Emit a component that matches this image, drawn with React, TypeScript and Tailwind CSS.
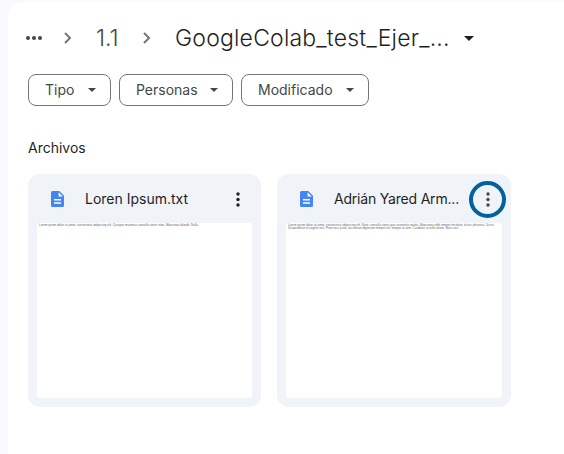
import React from "react";

function Caret({ className }: { className: string }) {
  return (
    <svg className={className} viewBox="0 0 10 5" fill="currentColor">
      <path d="M0 0h10L5 5z" />
    </svg>
  );
}

function Chevron() {
  return (
    <svg className="h-3 w-2 shrink-0 text-[#747775]" viewBox="0 0 8 12" fill="none" stroke="currentColor" strokeWidth="2">
      <path d="M1 1l5 5-5 5" />
    </svg>
  );
}

function Chip({ label, width }: { label: string; width: string }) {
  return (
    <button className={`flex h-8 items-center justify-between rounded-lg border border-[#747775] pr-[14px] pl-4 text-[#444746] ${width}`}>
      <span className="text-[14px] leading-5 whitespace-nowrap">{label}</span>
      <Caret className="h-1 w-2 shrink-0" />
    </button>
  );
}

function Dots({ color }: { color: string }) {
  return (
    <svg className={`h-[15px] w-1 ${color}`} viewBox="0 0 4 15" fill="currentColor">
      <circle cx="2" cy="2" r="1.7" />
      <circle cx="2" cy="7.5" r="1.7" />
      <circle cx="2" cy="13" r="1.7" />
    </svg>
  );
}

function DocIcon() {
  return (
    <svg className="h-4 w-[13px] shrink-0" viewBox="0 0 13 16">
      <path d="M1.5 0H8.3L13 4.7v9.8a1.5 1.5 0 0 1-1.5 1.5h-10A1.5 1.5 0 0 1 0 14.5v-13A1.5 1.5 0 0 1 1.5 0z" fill="#4285f4" />
      <path d="M7.6 1.2v4.2h4.2zM3 8h7v1.5H3zM3 11.2h7v1.5H3z" fill="#fff" />
    </svg>
  );
}

type CardProps = { name: string; width: string; text: string; lines: string[]; marked?: boolean };

function Card({ name, width, text, lines, marked }: CardProps) {
  return (
    <div className={`flex h-[233px] flex-col rounded-xl bg-[#f0f3f8] px-[9px] pb-[9px] ${width}`}>
      <div className="flex h-[49px] shrink-0 items-center pt-px pl-[14px]">
        <DocIcon />
        <span className={`ml-[21px] flex-1 text-[14px] leading-5 whitespace-nowrap text-[#1f1f1f] ${text}`}>{name}</span>
        <div className={`-mr-1 flex shrink-0 items-center justify-center rounded-full ${marked ? "size-[37px] border-4 border-[#01639b]" : "size-9"}`}>
          <Dots color={marked ? "text-[#444746]" : "text-[#1f1f1f]"} />
        </div>
      </div>
      <div className="min-h-0 flex-1 overflow-hidden rounded-[3px] bg-white pt-[1px] pl-[2px] font-['Liberation_Sans',sans-serif] text-[3px] leading-[3px] text-[#666]">
        {lines.map((line) => (
          <div key={line} className="whitespace-nowrap">{line}</div>
        ))}
      </div>
    </div>
  );
}

export default function App() {
  return (
    <div className="h-[454px] w-[564px] overflow-hidden bg-[#f8fafd] pt-0.5 pl-2 font-['Inter',sans-serif]">
      <main className="h-full rounded-tl-2xl bg-white pl-5">
        <nav className="flex h-[72px] items-center">
          <svg className="-ml-[2px] h-1 w-4 shrink-0 text-[#444746]" viewBox="0 0 16 4" fill="currentColor">
            <circle cx="2" cy="2" r="2" />
            <circle cx="8" cy="2" r="2" />
            <circle cx="14" cy="2" r="2" />
          </svg>
          <span className="ml-[22px] flex"><Chevron /></span>
          <span className="ml-6 w-[47px] text-[23px] leading-8 font-light text-[#444746]">1.1</span>
          <Chevron />
          <span className="ml-[24px] w-[274px] text-[23px] leading-8 font-light tracking-[0.2px] whitespace-nowrap text-[#1f1f1f]">GoogleColab_test_Ejer_...</span>
          <Caret className="ml-[15px] h-[5px] w-[10px] shrink-0 text-[#1f1f1f]" />
        </nav>
        <div className="flex gap-2">
          <Chip label="Tipo" width="w-[83px]" />
          <Chip label="Personas" width="w-[114px]" />
          <Chip label="Modificado" width="w-[128px]" />
        </div>
        <h2 className="mt-8 text-[14px] leading-5 text-[#1f1f1f]">Archivos</h2>
        <div className="mt-4 flex gap-4">
          <Card name="Loren Ipsum.txt" width="w-[233px]" text="" lines={["Lorem ipsum dolor sit amet, consectetur adipiscing elit. Quisque maximus convallis tortor vitae. Maecenas blandit. Nulla."]} />
          <Card name="Adrián Yared Arm..." width="w-[234px]" text="tracking-[-0.2px]" marked lines={[
            "Lorem ipsum dolor sit amet, consectetur adipiscing elit. Nunc convallis turpis quis venenatis mattis. Maecenas nibh tempor tincidunt, id orci pharetra. Ut est.",
            "Suspendisse et sagittis nisl. Proin arcu justo, accumsan dignissim tempor vel, tempor at sem. Curabitur ut nulla lorem. Nunc orci.",
          ]} />
        </div>
      </main>
    </div>
  );
}
